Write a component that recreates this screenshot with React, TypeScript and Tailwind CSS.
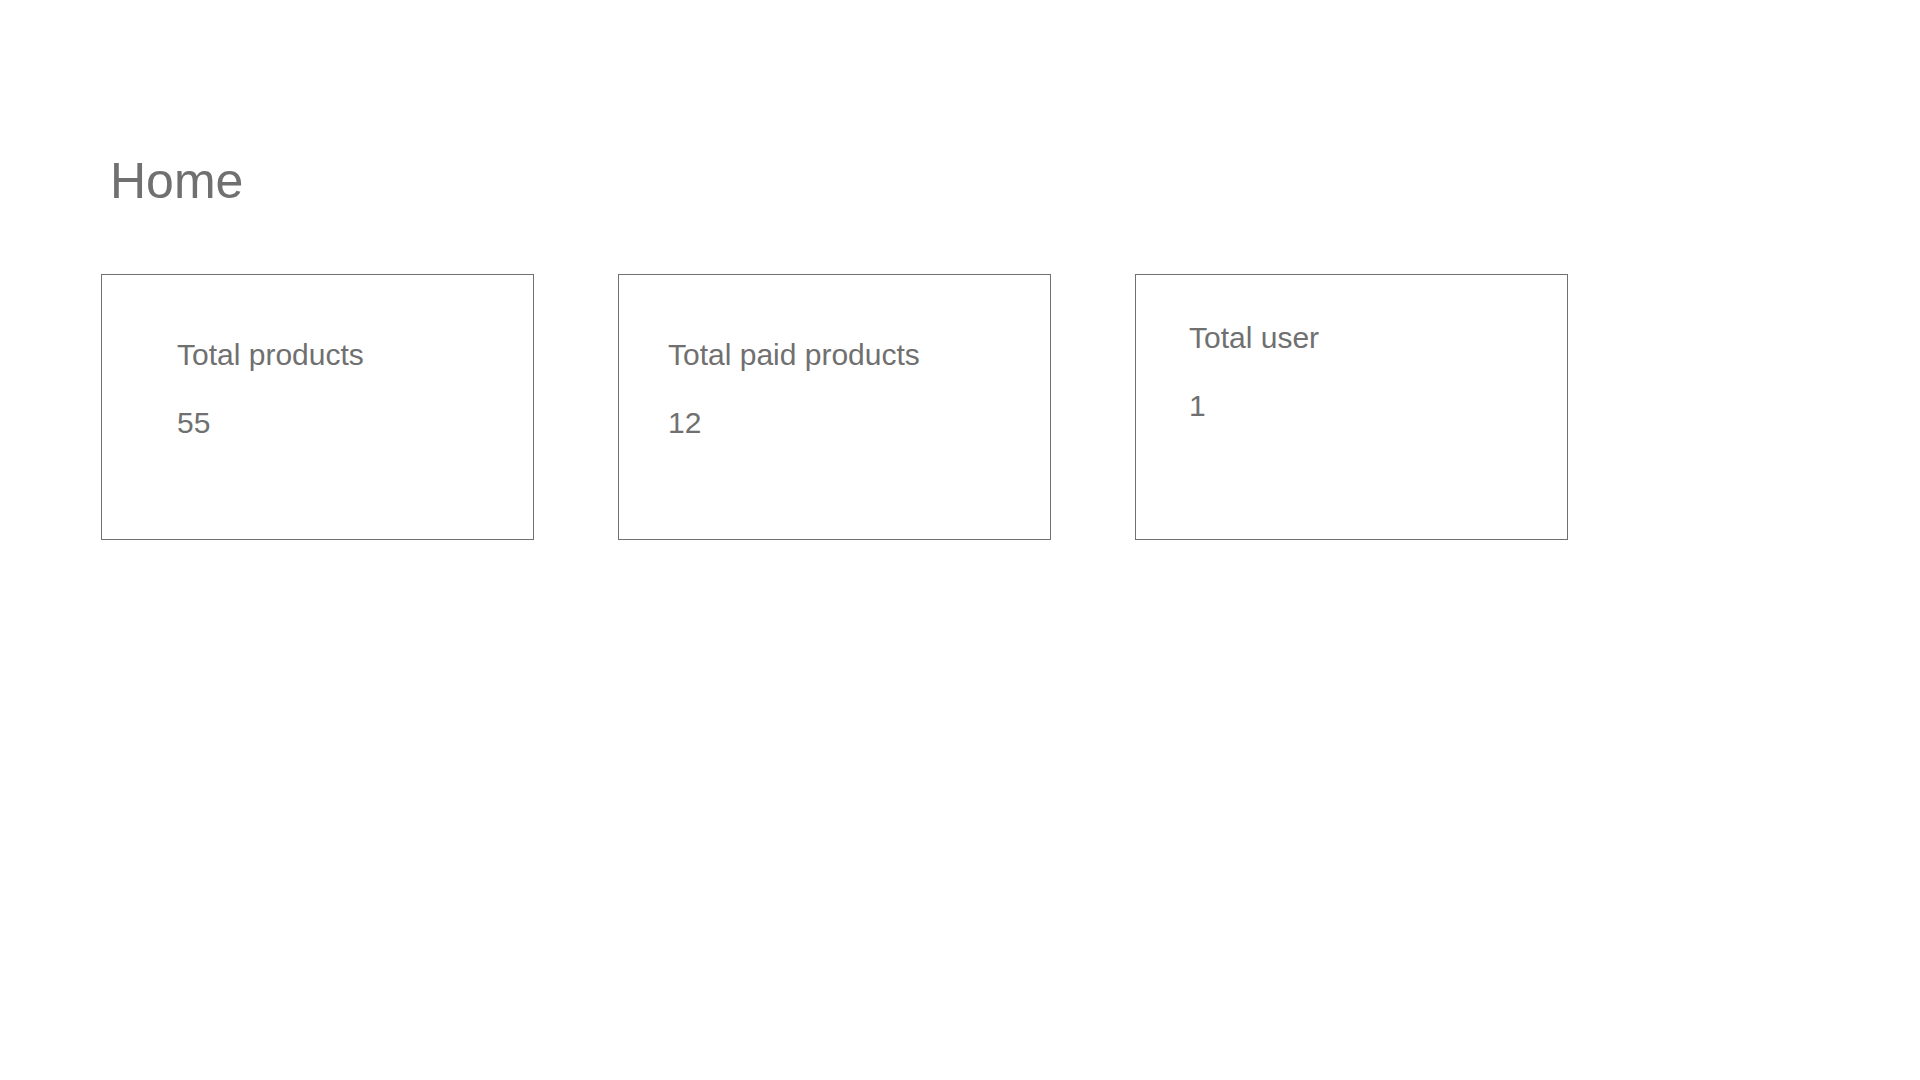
type Stat = { label: string; value: number; inset: string };

const stats: Stat[] = [
  { label: "Total products", value: 55, inset: "pl-[75px] pt-[63px]" },
  { label: "Total paid products", value: 12, inset: "pl-[49px] pt-[63px]" },
  { label: "Total user", value: 1, inset: "pl-[53px] pt-[46px]" },
];

export default function App() {
  return (
    <main className="min-h-screen bg-white px-[101px] pt-[150px] font-['Liberation_Sans',Arial,sans-serif] text-[#707070]">
      <h1 className="pl-[9px] text-[50px] leading-[62px]">Home</h1>
      <section className="mt-[62px] grid max-w-[1467px] grid-cols-3 gap-[84px]">
        {stats.map((s) => (
          <article
            key={s.label}
            className={`min-h-[266px] border border-[#707070] text-[30px] leading-[34px] ${s.inset}`}
          >
            <h2>{s.label}</h2>
            <p className="mt-[34px]">{s.value}</p>
          </article>
        ))}
      </section>
    </main>
  );
}
